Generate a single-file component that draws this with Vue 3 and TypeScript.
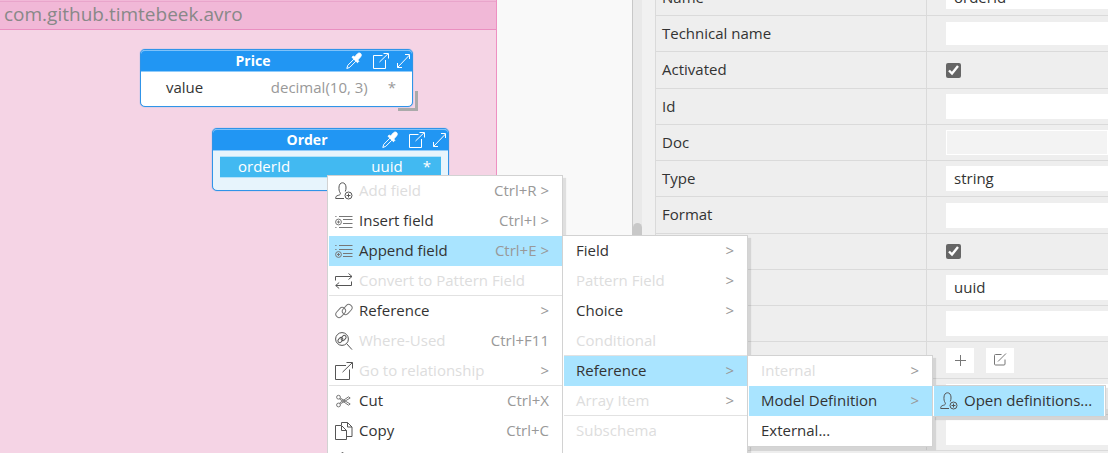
<script setup lang="ts">
import { ref } from 'vue'

interface MenuItem {
  label: string
  icon?: string
  soft?: boolean
  keys?: string
  sub?: boolean
  disabled?: boolean
  active?: boolean
  line?: boolean
}

interface Property {
  id: string
  label: string
  kind: 'text' | 'check' | 'buttons'
  value?: string
  size?: 'low' | 'tall'
  readonly?: boolean
}

const properties = ref<Property[]>([
  { id: 'name', label: 'Name', kind: 'text', value: 'orderId', size: 'low' },
  { id: 'technical', label: 'Technical name', kind: 'text', value: '', size: 'low' },
  { id: 'activated', label: 'Activated', kind: 'check', size: 'tall' },
  { id: 'ident', label: 'Id', kind: 'text', value: '' },
  { id: 'doc', label: 'Doc', kind: 'text', value: '', readonly: true },
  { id: 'type', label: 'Type', kind: 'text', value: 'string' },
  { id: 'format', label: 'Format', kind: 'text', value: '', size: 'tall' },
  { id: 'p8', label: '', kind: 'check' },
  { id: 'p9', label: '', kind: 'text', value: 'uuid' },
  { id: 'p10', label: '', kind: 'text', value: '' },
  { id: 'p11', label: '', kind: 'buttons', size: 'tall' },
  { id: 'p12', label: '', kind: 'text', value: '' },
  { id: 'p13', label: '', kind: 'text', value: '' },
])

const menus: { name: string; items: MenuItem[] }[] = [
  {
    name: 'context',
    items: [
      { label: 'Add field', icon: 'user', keys: 'Ctrl+R', sub: true, disabled: true },
      { label: 'Insert field', icon: 'insert', soft: true, keys: 'Ctrl+I', sub: true },
      { label: 'Append field', icon: 'append', soft: true, keys: 'Ctrl+E', sub: true, active: true },
      { label: 'Convert to Pattern Field', icon: 'convert', disabled: true, line: true },
      { label: 'Reference', icon: 'chain', soft: true, sub: true },
      { label: 'Where-Used', icon: 'where', keys: 'Ctrl+F11', disabled: true },
      { label: 'Go to relationship', icon: 'open', sub: true, disabled: true, line: true },
      { label: 'Cut', icon: 'cut', soft: true, keys: 'Ctrl+X' },
      { label: 'Copy', icon: 'copy', keys: 'Ctrl+C' },
      { label: '', icon: 'paste' },
    ],
  },
  {
    name: 'append',
    items: [
      { label: 'Field', sub: true },
      { label: 'Pattern Field', sub: true, disabled: true },
      { label: 'Choice', sub: true },
      { label: 'Conditional', disabled: true, line: true },
      { label: 'Reference', sub: true, active: true },
      { label: 'Array Item', sub: true, disabled: true, line: true },
      { label: 'Subschema', disabled: true },
    ],
  },
  {
    name: 'reference',
    items: [
      { label: 'Internal', sub: true, disabled: true },
      { label: 'Model Definition', sub: true, active: true },
      { label: 'External...' },
    ],
  },
  {
    name: 'definitions',
    items: [{ label: 'Open definitions...', icon: 'user', active: true }],
  },
]

const entities = [
  { name: 'Price', field: 'value', type: 'decimal(10, 3)', selected: false },
  { name: 'Order', field: 'orderId', type: 'uuid', selected: true },
]
</script>

<template>
  <svg class="defs" aria-hidden="true">
    <symbol id="i-user" viewBox="0 0 18 18">
      <path d="M9 16.500H.7c-.2-1.900.7-2.700 2.700-3.200 1.900-.5 2.400-1.200 1.700-2.600C4.200 9.300 3.800 7.300 4 5c.2-2.600 1.500-4.200 3.500-4.200S10.800 2.400 11 5c.1 1.700-.1 3-.7 4.500" />
      <circle cx="13.500" cy="13.500" r="3.500" /><path d="M13.500 11.500v4M11.500 13.500h4" />
    </symbol>
    <symbol id="i-insert" viewBox="0 0 18 18">
      <path d="M.3 4.500h1.200M4 4.500h13.500M8 7.500h9.500M8 11.500h9.500M4 15.500h13.500M.3 15.500h1.200" />
      <circle cx="3.500" cy="10" r="2.900" /><path d="M3.500 8.500v3M2 10h3" />
    </symbol>
    <symbol id="i-append" viewBox="0 0 18 18">
      <path d="M.3 3.500h1.200M4 3.500h13.500M.3 7.500h1.200M4 7.500h13.500M8 11.500h9.500M8 14.500h9.500" />
      <circle cx="3.500" cy="12.500" r="2.900" /><path d="M3.500 11v3M2 12.500h3" />
    </symbol>
    <symbol id="i-convert" viewBox="0 0 18 18">
      <path d="M.5 8.500v-4h16.500M13.500 1.500l3.500 3-3.500 3M16.500 9.500v4H.8M4.200 10.500l-3.500 3 3.500 3" />
    </symbol>
    <symbol id="i-chain" viewBox="0 0 18 18">
      <rect x="-5.600" y="-3.300" width="11.200" height="6.600" rx="3.300" transform="translate(5.700 10.500) rotate(-48)" />
      <rect x="-5.600" y="-3.300" width="11.200" height="6.600" rx="3.300" transform="translate(12.200 7.500) rotate(-48)" />
    </symbol>
    <symbol id="i-where" viewBox="0 0 18 18">
      <circle cx="7" cy="7" r="6.400" /><path d="M11.600 11.600l5.400 6" />
      <rect x="-2.900" y="-1.800" width="5.800" height="3.600" rx="1.800" transform="translate(5.400 8) rotate(-50)" />
      <rect x="-2.900" y="-1.800" width="5.800" height="3.600" rx="1.800" transform="translate(8.600 6) rotate(-50)" />
    </symbol>
    <symbol id="i-open" viewBox="0 0 18 18">
      <path d="M11 3.500H.5v14h14V7.500M7.500 10.200L17.200.8M11.500.5h6v6" />
    </symbol>
    <symbol id="i-open-small" viewBox="0 0 16 16">
      <path d="M9.500 2.500H.5v13h12V7M6.500 9L15 .8M10.500.5h5v5" />
    </symbol>
    <symbol id="i-cut" viewBox="0 0 18 18">
      <circle cx="3.500" cy="5.200" r="1.900" /><circle cx="3.500" cy="13" r="1.900" />
      <path d="M5.200 6l10 6-1.700 1.200L4.600 7M5.200 12l10-6-1.700-1.200L4.600 11" />
    </symbol>
    <symbol id="i-copy" viewBox="0 0 18 18">
      <path d="M6 3.500H.5v14h11V8.500L6.500 3.500v5h5M6.500 3.200V.5h6l4.500 4.500v9.500h-5.500M12.500.5v4.500H17" />
    </symbol>
    <symbol id="i-paste" viewBox="0 0 18 18">
      <path d="M5 3.500H1.500v14h12v-14H10M5 4.500v-2c1 0 1.200-2 2.500-2s1.500 2 2.500 2v2z" />
    </symbol>
    <symbol id="i-dropper" viewBox="0 0 18 18">
      <path d="M1.800 16.500l1-3.200 6.200-6.200 2 2-6.200 6.200z" />
      <path class="solid" d="M7 5.300l1.300-1.300 1.400 1 2.600-3c1.300-1.400 3-1 3.500-.3.700.9.600 2.200-.3 3.200L12.700 8l1.100 1.400-1.300 1.300z" />
    </symbol>
    <symbol id="i-expand" viewBox="0 0 18 18">
      <path d="M3.500 15.500l12-12.500M11 2.500h4.500V7M3.500 11v4.500H8" />
    </symbol>
    <symbol id="i-plus" viewBox="0 0 18 18"><path d="M9.500 4v11M4 9.500h11" /></symbol>
    <symbol id="i-edit" viewBox="0 0 18 18">
      <path d="M10.500 3.500h-6q-1 0-1 1v8.500q0 1 1 1h8.500q1 0 1-1V8.500M7 10.500l8-8" />
    </symbol>
  </svg>

  <main class="app">
    <section class="canvas">
      <div class="package">
        <header class="package-title">com.github.timtebeek.avro</header>
      </div>
      <article
        v-for="e in entities"
        :key="e.name"
        class="entity"
        :class="[e.name.toLowerCase(), { selected: e.selected }]"
      >
        <header class="entity-head">
          <strong>{{ e.name }}</strong>
          <svg class="icon dropper"><use href="#i-dropper" /></svg>
          <svg class="icon"><use href="#i-open-small" /></svg>
          <svg class="icon expand"><use href="#i-expand" /></svg>
        </header>
        <div class="entity-row">
          <span class="field">{{ e.field }}</span>
          <span class="type">{{ e.type }}</span>
          <span class="star">*</span>
        </div>
        <i v-if="!e.selected" class="grip"></i>
      </article>
    </section>

    <div class="scroll"><div class="thumb"></div></div>

    <section class="panel">
      <table>
        <tbody>
          <tr v-for="p in properties" :key="p.id" :class="p.size">
            <th scope="row"><label :for="p.id">{{ p.label }}</label></th>
            <td>
              <div class="cell">
                <input
                  v-if="p.kind === 'text'"
                  :id="p.id"
                  v-model="p.value"
                  type="text"
                  :readonly="p.readonly"
                />
                <input v-else-if="p.kind === 'check'" :id="p.id" type="checkbox" checked />
                <template v-else>
                  <button :id="p.id" type="button" aria-label="Add"><svg class="icon"><use href="#i-plus" /></svg></button>
                  <button type="button" aria-label="Edit"><svg class="icon"><use href="#i-edit" /></svg></button>
                </template>
              </div>
            </td>
          </tr>
        </tbody>
      </table>
    </section>

    <div v-for="m in menus" :key="m.name" class="menu" :class="m.name" role="menu">
      <button
        v-for="item in m.items"
        :key="item.label"
        type="button"
        role="menuitem"
        class="item"
        :class="{ active: item.active, line: item.line, soft: item.soft }"
        :disabled="item.disabled"
      >
        <svg v-if="item.icon" class="icon"><use :href="'#i-' + item.icon" /></svg>
        <span class="label">{{ item.label }}</span>
        <span v-if="item.keys || item.sub" class="keys">{{ item.keys }}<template v-if="item.sub"> &gt;</template></span>
      </button>
    </div>
  </main>
</template>

<style>
body {
  overflow: hidden;
}
</style>

<style scoped>
* {
  box-sizing: border-box;
}
.defs {
  position: absolute;
  width: 0;
  height: 0;
}
.app {
  position: relative;
  display: flex;
  height: 100vh;
  overflow: hidden;
  background: #f1f1f1;
  color: #333;
  font: 15px/20px "Open Sans", "Noto Sans", sans-serif;
}
button,
input {
  font: inherit;
  color: inherit;
}
.icon {
  flex: none;
  width: 18px;
  height: 18px;
  fill: none;
  stroke: #555;
  stroke-width: 1;
}
.soft .icon {
  stroke: #777;
}
.solid {
  fill: #fff;
}

.canvas {
  position: relative;
  flex: 0 0 632px;
  overflow: hidden;
  background: #f9f9f9;
}
.package {
  width: 497px;
  height: 100%;
  background: #f5d4e5;
  border-right: 1px solid #ee90c2;
}
.package-title {
  height: 30px;
  padding-left: 4px;
  background: linear-gradient(#e9a5cb, #e9a5cb) 0 1px / 100% 1px no-repeat #f1b8d7;
  border-bottom: 1px solid #ea8fc0;
  color: #888;
  font-size: 19px;
  line-height: 28px;
}
.entity {
  position: absolute;
  background: #fff;
  border: 1px solid #3094e8;
  border-radius: 5px;
  box-shadow: 0 0 1px #3094e8;
}
.price {
  left: 140px;
  top: 49px;
  width: 273px;
  height: 58px;
}
.order {
  left: 212px;
  top: 128px;
  width: 237px;
  height: 63px;
}
.entity-head {
  display: flex;
  align-items: center;
  height: 22px;
  background: #2196f3;
  border-top: 1px solid #7ec2fa;
  border-bottom: 1px solid #90cbfa;
  border-radius: 4px 4px 0 0;
  color: #fff;
  font-size: 14px;
}
.entity-head strong {
  flex: 1;
  padding-left: 20px;
  text-align: center;
}
.entity-head .icon {
  width: 16px;
  height: 16px;
  margin-left: 10px;
  stroke: #fff;
}
.entity-head .dropper {
  width: 18px;
  height: 18px;
  margin: 0;
}
.entity-head .expand {
  width: 18px;
  height: 18px;
  margin-left: 5px;
}
.entity-row {
  display: flex;
  align-items: center;
  height: 30px;
  padding: 0 16px 0 25px;
}
.field {
  flex: 1;
}
.type,
.star {
  color: #999;
}
.star {
  margin-left: 20px;
}
.selected {
  background: #e7f4fc;
}
.selected .entity-row {
  height: 22px;
  margin: 5px 7px 0;
  padding: 0 10px 2px 18px;
  background: #42b9f1;
  border: 1px solid #b5e2f9;
  border-width: 1px 0;
}
.selected .entity-row span {
  color: #fff;
}
.grip {
  position: absolute;
  right: -6px;
  bottom: -5px;
  width: 20px;
  height: 20px;
  border: solid #aaa;
  border-width: 0 3px 3px 0;
}

.scroll {
  flex: 0 0 10px;
  padding-top: 223px;
  background: #e9e9e9;
  border-left: 1px solid #c8c8c8;
}
.thumb {
  height: 100%;
  border-radius: 5px 5px 0 0;
  background: #c8c8c8;
}
.panel {
  flex: 1;
  min-width: 0;
  margin-left: 13px;
  overflow: hidden;
  background: #eee;
  border-left: 1px solid #dadada;
}
table {
  width: 100%;
  margin-top: -20px;
  border-spacing: 0;
  table-layout: fixed;
}
th,
td {
  height: 36px;
  padding: 0;
  border-bottom: 1px solid #dadada;
}
.tall th,
.tall td {
  height: 37px;
}
th {
  width: 271px;
  padding: 0 0 2px 6px;
  border-right: 1px solid #dadada;
  font-weight: 400;
  text-align: left;
}
.cell {
  display: flex;
  align-items: center;
  gap: 12px;
  padding-left: 19px;
}
.cell input[type="text"] {
  flex: 1;
  min-width: 0;
  height: 25px;
  padding: 0 8px 2px;
  border: 0;
  border-radius: 0;
  background: #fff;
}
.low .cell input[type="text"] {
  height: 23px;
}
.cell input[readonly] {
  background: #f3f3f3;
  border: 1px solid #fff;
}
input[type="checkbox"] {
  width: 15px;
  height: 15px;
  margin: 0;
  accent-color: #666;
}
.cell button {
  display: flex;
  align-items: center;
  justify-content: center;
  width: 28px;
  height: 25px;
  padding: 0;
  border: 0;
  background: #fff;
}
.cell .icon {
  stroke: #777;
}

.menu {
  position: absolute;
  padding-left: 1px;
  background: #fff;
  border: 1px solid #d2d2d2;
  box-shadow: 3px 3px 1px rgba(0, 0, 0, 0.1);
}
.context {
  left: 327px;
  top: 175px;
  width: 236px;
}
.append {
  left: 562px;
  top: 235px;
  bottom: -30px;
  width: 186px;
}
.reference {
  left: 747px;
  top: 355px;
  width: 186px;
}
.definitions {
  left: 932px;
  top: 385px;
  width: 174px;
  padding-right: 1px;
}
.item {
  display: flex;
  align-items: center;
  width: 100%;
  height: 30px;
  padding: 0 13px 0 12px;
  border: 0;
  background: none;
  text-align: left;
  white-space: nowrap;
}
.item.line {
  border-bottom: 1px solid #e2e2e2;
}
.item.active {
  background: #a9e4ff;
}
.item:disabled .label {
  color: #ddd;
}
.context .item,
.definitions .item {
  padding-left: 6px;
}
.item .icon {
  margin-right: 6px;
}
.label,
.keys {
  padding-bottom: 2px;
}
.keys {
  margin-left: auto;
  color: #999;
}
</style>
